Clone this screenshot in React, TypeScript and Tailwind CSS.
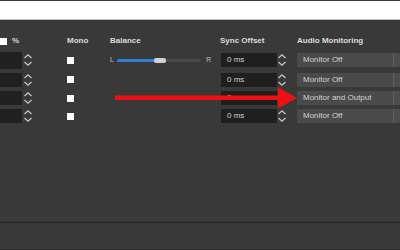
import React from 'react';

const rows = [
  { monitor: 'Monitor Off', h: 'h-[20px]' },
  { monitor: 'Monitor Off', h: 'h-[19px]' },
  { monitor: 'Monitor and Output', h: 'h-[18px]' },
  { monitor: 'Monitor Off', h: 'h-[18px]' },
];

function Spin() {
  return (
    <svg width="10" height="14" viewBox="0 0 10 14" className="shrink-0">
      <path d="M1.5 5 L5 1.8 L8.5 5" fill="none" stroke="#c9c9c9" strokeWidth="1.2" />
      <path d="M1.5 9 L5 12.2 L8.5 9" fill="none" stroke="#c9c9c9" strokeWidth="1.2" />
    </svg>
  );
}

function Check() {
  return <div className="w-[7px] h-[7px] bg-white shrink-0" />;
}

export default function App() {
  return (
    <div
      className="relative w-[400px] h-[250px] overflow-hidden bg-[#3a393a] text-[8px] text-[#cfcfcf]"
      style={{ fontFamily: '"Liberation Sans", Arial, sans-serif' }}
    >
      {/* top strip */}
      <div className="h-[1px] bg-[#3c3c3c]" />
      <div className="h-[19px] bg-white border-b border-[#bdbdbd]" />

      {/* header */}
      <div className="flex items-center h-[14px] mt-[14px] font-bold text-[#dcdcdc]">
        <div className="w-[67px] flex items-center gap-[5px]">
          <Check />
          <span>%</span>
        </div>
        <div className="w-[43px]">Mono</div>
        <div className="w-[110px]">Balance</div>
        <div className="w-[77px]">Sync Offset</div>
        <div className="flex-1">Audio Monitoring</div>
      </div>

      {/* rows */}
      <div className="mt-[2px] flex flex-col">
        {rows.map((r, i) => (
          <div key={i} className={`flex items-center ${r.h}`}>
            <div className="w-[67px] flex items-center gap-[1px]">
              <div className={`w-[22px] ${i === 0 ? 'h-[17px]' : 'h-[14px]'} bg-[#202020]`} />
              <Spin />
            </div>
            <div className="w-[43px]">
              <Check />
            </div>
            <div className="w-[110px] flex items-center">
              {i === 0 && (
                <>
                  <span className="w-[7px] text-[7px] text-[#bdbdbd]">L</span>
                  <div className="relative w-[84px] h-[3px] bg-[#4b4b4b] rounded-full">
                    <div className="absolute left-0 top-0 h-[3px] w-[38px] bg-[#2f7ed4] rounded-full" />
                    <div className="absolute left-[37px] top-[-1px] w-[12px] h-[5px] bg-[#cfd2d4] rounded-[2px]" />
                  </div>
                  <span className="ml-[5px] text-[7px] text-[#bdbdbd]">R</span>
                </>
              )}
            </div>
            <div className="w-[77px] flex items-center">
              <div className="ml-[1px] w-[56px] h-[14px] bg-[#1f1f1f] flex items-center pl-[6px] text-[#d0d0d0]">
                0 ms
              </div>
              <Spin />
            </div>
            <div className="flex-1 flex items-center h-[14px]">
              <div className="w-[96px] h-[14px] bg-[#4a4a4a] flex items-center pl-[6px] text-[#d2d2d2] whitespace-nowrap">
                {r.monitor}
              </div>
              <div className="w-[1px] h-[14px] bg-[#5e5e5e]" />
              <div className="flex-1 h-[14px] bg-[#4d4d4d]" />
            </div>
          </div>
        ))}
      </div>

      {/* bottom lines */}
      <div className="absolute left-0 right-0 top-[217px] h-[1px] bg-[#414141]" />
      <div className="absolute left-0 right-0 top-[222px] h-[1px] bg-[#232323]" />
      <div className="absolute left-0 right-0 bottom-0 h-[1px] bg-[#2c2c2c]" />

      {/* red annotation arrow */}
      <svg className="absolute left-0 top-0" width="400" height="250">
        <rect x="115" y="95.5" width="166" height="4.5" fill="#ee1111" />
        <polygon points="278,87 297,98 278,108.5" fill="#ee1111" />
      </svg>
    </div>
  );
}
